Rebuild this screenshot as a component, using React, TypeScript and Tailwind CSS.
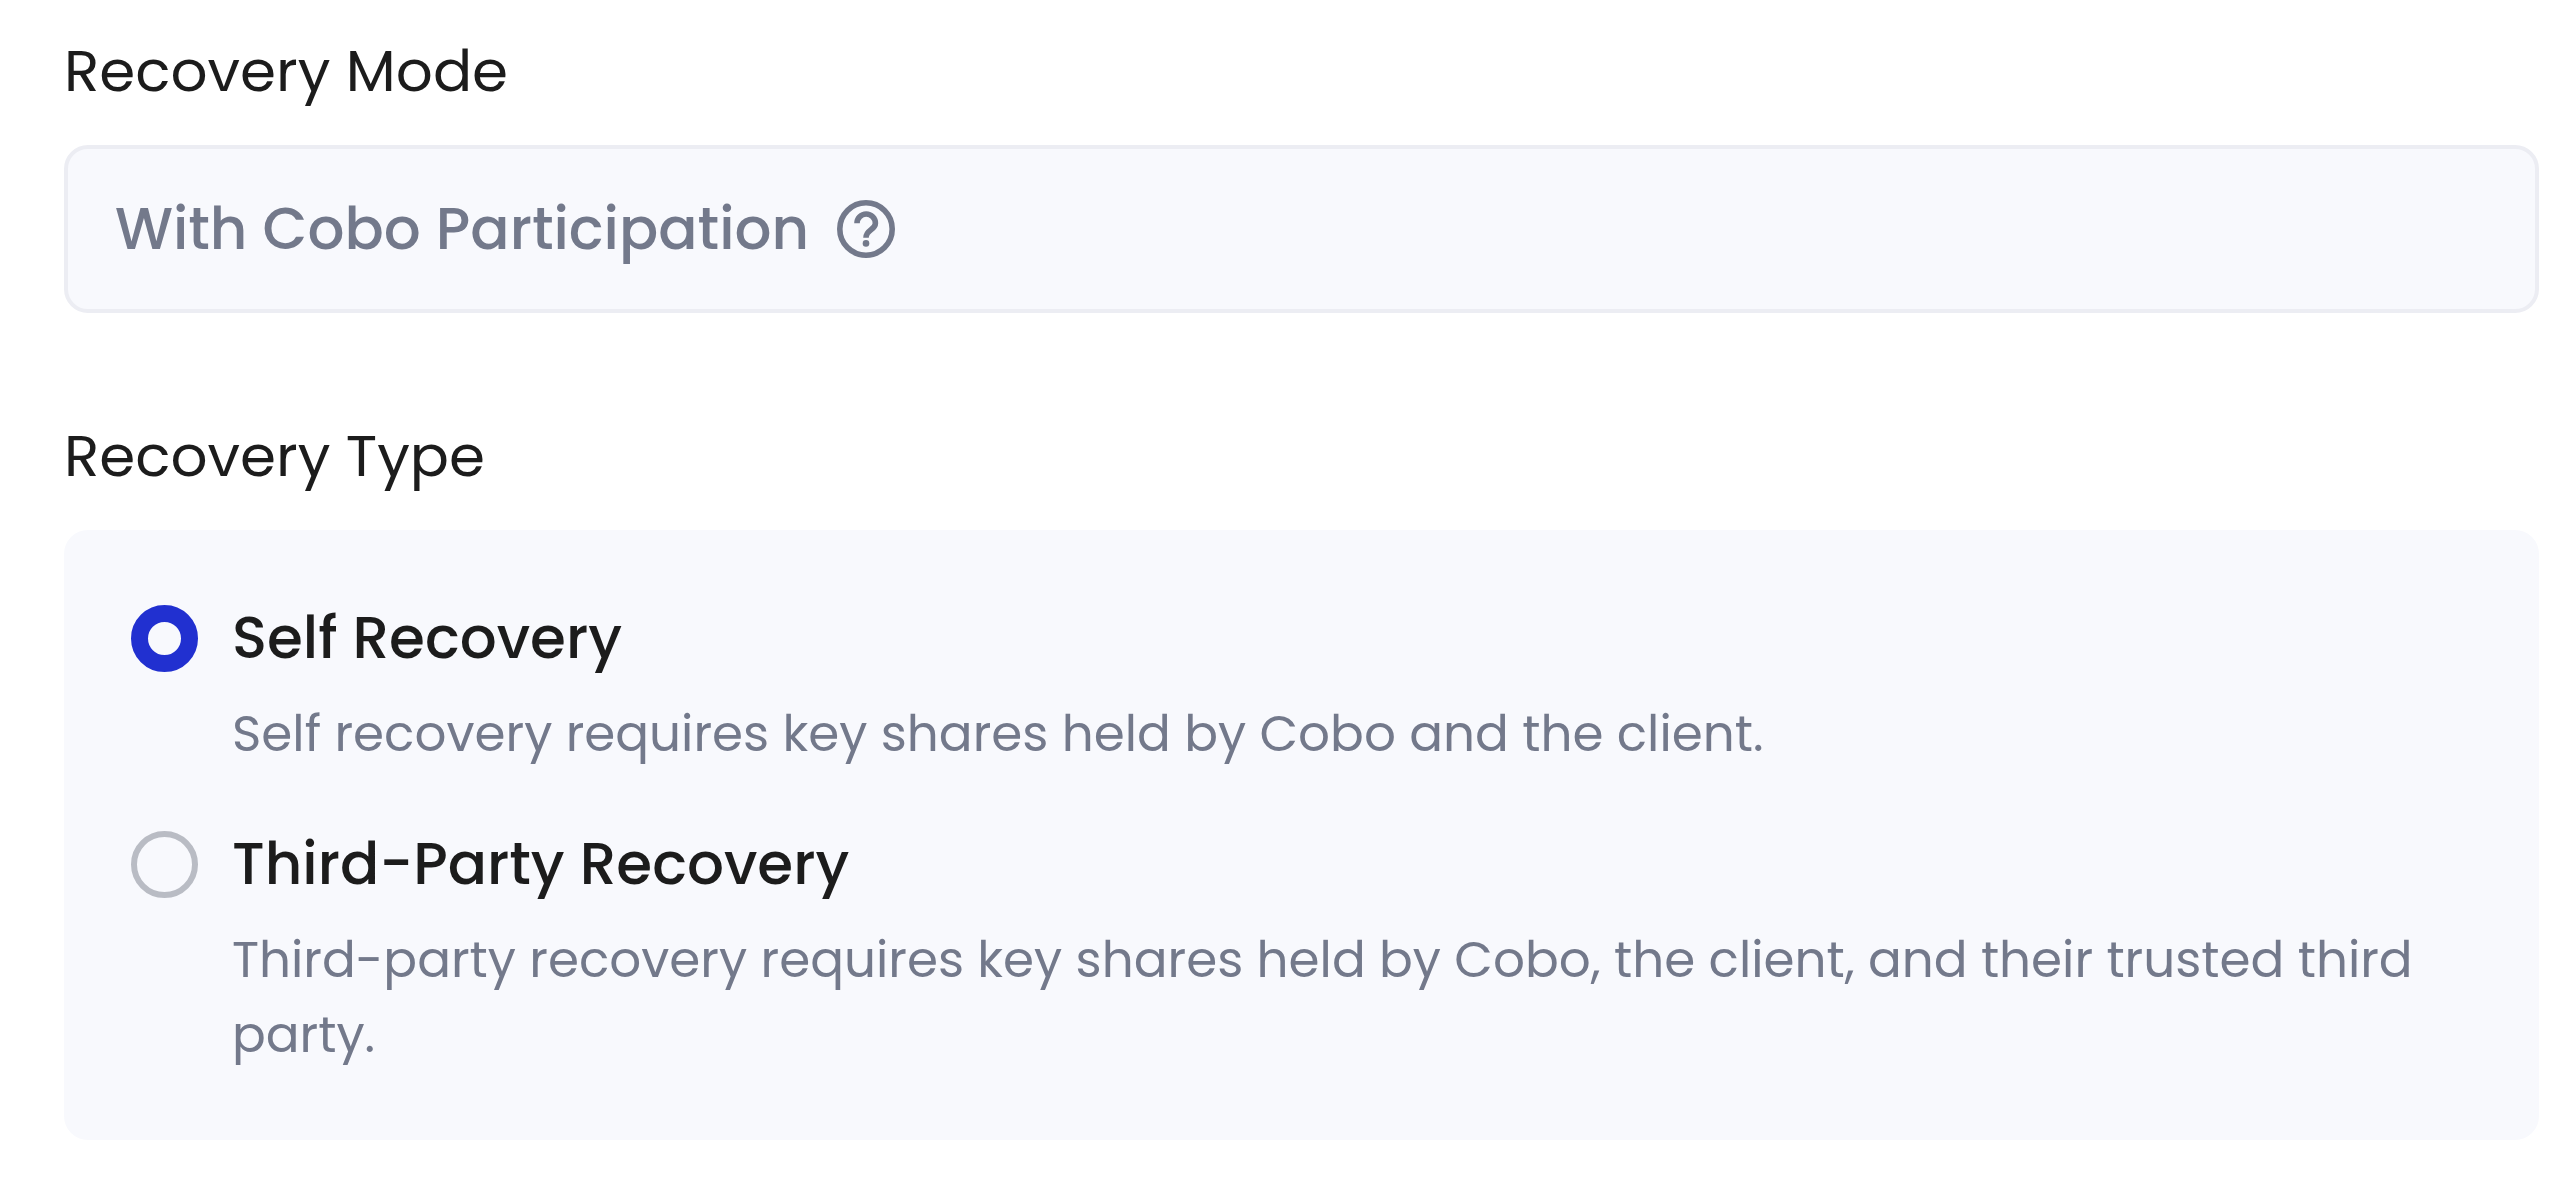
import { useState } from "react";

const recoveryTypes = [
  {
    id: "self",
    title: "Self Recovery",
    description: "Self recovery requires key shares held by Cobo and the client.",
  },
  {
    id: "third-party",
    title: "Third-Party Recovery",
    description:
      "Third-party recovery requires key shares held by Cobo, the client, and their trusted third party.",
  },
];

function HelpIcon() {
  return (
    <svg viewBox="0 0 58 58" fill="none" className="size-[58px]" aria-hidden="true">
      <circle cx="29" cy="29" r="26.2" stroke="currentColor" strokeWidth="5.6" />
      <path
        d="M20 23.2A9.2 9.2 0 0 1 38.4 23.2C38.4 30 29 29.8 29 37.7"
        stroke="currentColor"
        strokeWidth="5.6"
      />
      <circle cx="29" cy="43.4" r="3.3" fill="currentColor" />
    </svg>
  );
}

export default function App() {
  const [selected, setSelected] = useState("self");

  return (
    <main className="min-h-screen bg-white pt-[29px] pr-[37px] pb-[60px] pl-[64px] font-['Poppins','Inter',sans-serif] text-[#1c1c1c]">
      <section aria-labelledby="mode-heading">
        <h2 id="mode-heading" className="text-[58px] leading-[84px]">
          Recovery Mode
        </h2>
        <div className="mt-8 flex items-center gap-7 rounded-3xl border-4 border-[#ecedf3] bg-[#f8f9fd] px-[47px] py-[38px] text-[#73798b]">
          <span className="text-[58px] leading-[84px] font-medium">With Cobo Participation</span>
          <button type="button" aria-label="About this recovery mode">
            <HelpIcon />
          </button>
        </div>
      </section>

      <fieldset className="mt-[101px]">
        <legend className="text-[58px] leading-[84px]">Recovery Type</legend>
        <div className="mt-8 flex flex-col gap-[51px] rounded-3xl bg-[#f8f9fd] px-[67px] pt-[66px] pb-[68px]">
          {recoveryTypes.map((type) => (
            <div key={type.id} className="flex items-start gap-[34px]">
              <div className="flex h-[84px] shrink-0 items-center">
                <input
                  type="radio"
                  name="recovery-type"
                  id={type.id}
                  aria-describedby={`${type.id}-description`}
                  checked={selected === type.id}
                  onChange={() => setSelected(type.id)}
                  className="size-[67px] appearance-none rounded-full border-[6px] border-[#b9bcc4] checked:border-[17px] checked:border-[#2130d0]"
                />
              </div>
              <div className="min-w-0 flex-1">
                <label htmlFor={type.id} className="block text-[58px] leading-[84px] font-medium">
                  {type.title}
                </label>
                <p
                  id={`${type.id}-description`}
                  className="mt-4 text-[50px] leading-[75px] text-[#73798b]"
                >
                  {type.description}
                </p>
              </div>
            </div>
          ))}
        </div>
      </fieldset>
    </main>
  );
}
